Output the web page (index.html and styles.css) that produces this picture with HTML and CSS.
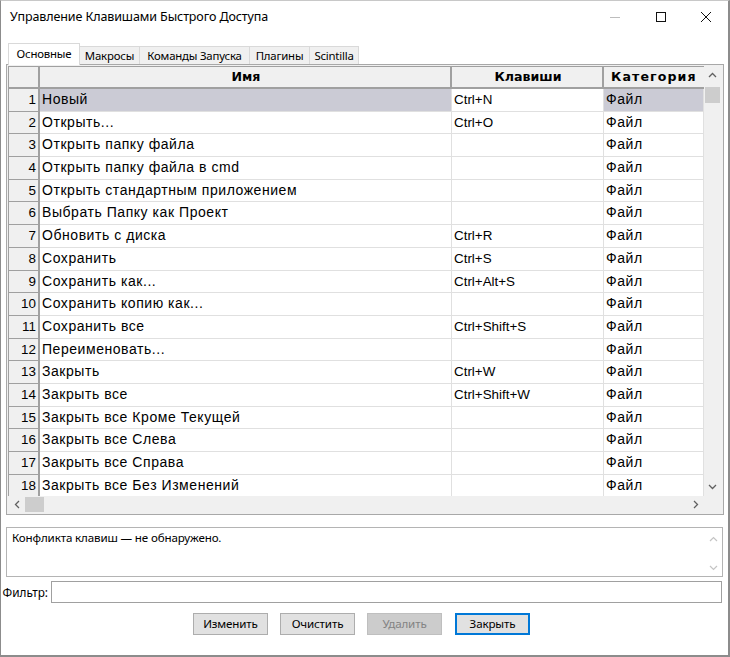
FILE: index.html
```html
<!DOCTYPE html>
<html lang="ru">
<head>
<meta charset="utf-8">
<title>Управление Клавишами Быстрого Доступа</title>
<link rel="stylesheet" href="styles.css">
</head>
<body>
<div class="window">
  <div class="titlebar">
    <div class="title">Управление Клавишами Быстрого Доступа</div>
    <div class="controls">
      <span class="ctl"><svg width="12" height="12" viewBox="0 0 12 12"><line x1="1" y1="6.5" x2="11" y2="6.5" stroke="#bdbdbd" stroke-width="1"/></svg></span>
      <span class="ctl"><svg width="12" height="12" viewBox="0 0 12 12"><rect x="1.5" y="1.5" width="9" height="9" fill="none" stroke="#111" stroke-width="1"/></svg></span>
      <span class="ctl"><svg width="12" height="12" viewBox="0 0 12 12"><path d="M1 1 L11 11 M11 1 L1 11" stroke="#111" stroke-width="1"/></svg></span>
    </div>
  </div>

  <div class="tabs">
    <div class="tab active t1">Основные</div>
    <div class="tab t2">Макросы</div>
    <div class="tab t3">Команды Запуска</div>
    <div class="tab t4">Плагины</div>
    <div class="tab t5">Scintilla</div>
  </div>

  <div class="grid">
    <div class="table">
      <div class="row head">
        <div class="c num"></div>
        <div class="c hname">Имя</div>
        <div class="c hkeys">Клавиши</div>
        <div class="c hcat">Категория</div>
      </div>
      <div class="row sel"><div class="c num">1</div><div class="c name">Новый</div><div class="c keys">Ctrl+N</div><div class="c cat">Файл</div></div>
      <div class="row"><div class="c num">2</div><div class="c name">Открыть...</div><div class="c keys">Ctrl+O</div><div class="c cat">Файл</div></div>
      <div class="row"><div class="c num">3</div><div class="c name">Открыть папку файла</div><div class="c keys"></div><div class="c cat">Файл</div></div>
      <div class="row"><div class="c num">4</div><div class="c name">Открыть папку файла в cmd</div><div class="c keys"></div><div class="c cat">Файл</div></div>
      <div class="row"><div class="c num">5</div><div class="c name">Открыть стандартным приложением</div><div class="c keys"></div><div class="c cat">Файл</div></div>
      <div class="row"><div class="c num">6</div><div class="c name">Выбрать Папку как Проект</div><div class="c keys"></div><div class="c cat">Файл</div></div>
      <div class="row"><div class="c num">7</div><div class="c name">Обновить с диска</div><div class="c keys">Ctrl+R</div><div class="c cat">Файл</div></div>
      <div class="row"><div class="c num">8</div><div class="c name">Сохранить</div><div class="c keys">Ctrl+S</div><div class="c cat">Файл</div></div>
      <div class="row"><div class="c num">9</div><div class="c name">Сохранить как...</div><div class="c keys">Ctrl+Alt+S</div><div class="c cat">Файл</div></div>
      <div class="row"><div class="c num">10</div><div class="c name">Сохранить копию как...</div><div class="c keys"></div><div class="c cat">Файл</div></div>
      <div class="row"><div class="c num">11</div><div class="c name">Сохранить все</div><div class="c keys">Ctrl+Shift+S</div><div class="c cat">Файл</div></div>
      <div class="row"><div class="c num">12</div><div class="c name">Переименовать...</div><div class="c keys"></div><div class="c cat">Файл</div></div>
      <div class="row"><div class="c num">13</div><div class="c name">Закрыть</div><div class="c keys">Ctrl+W</div><div class="c cat">Файл</div></div>
      <div class="row"><div class="c num">14</div><div class="c name">Закрыть все</div><div class="c keys">Ctrl+Shift+W</div><div class="c cat">Файл</div></div>
      <div class="row"><div class="c num">15</div><div class="c name">Закрыть все Кроме Текущей</div><div class="c keys"></div><div class="c cat">Файл</div></div>
      <div class="row"><div class="c num">16</div><div class="c name">Закрыть все Слева</div><div class="c keys"></div><div class="c cat">Файл</div></div>
      <div class="row"><div class="c num">17</div><div class="c name">Закрыть все Справа</div><div class="c keys"></div><div class="c cat">Файл</div></div>
      <div class="row"><div class="c num">18</div><div class="c name">Закрыть все Без Изменений</div><div class="c keys"></div><div class="c cat">Файл</div></div>
    </div>
    <div class="vscroll">
      <div class="arrow"><svg width="9" height="6" viewBox="0 0 9 6"><path d="M1 5 L4.5 1.5 L8 5" fill="none" stroke="#606060" stroke-width="1.3"/></svg></div>
      <div class="vtrack"><div class="vthumb"></div></div>
      <div class="arrow"><svg width="9" height="6" viewBox="0 0 9 6"><path d="M1 1 L4.5 4.5 L8 1" fill="none" stroke="#606060" stroke-width="1.3"/></svg></div>
    </div>
    <div class="hscroll">
      <div class="arrow"><svg width="6" height="9" viewBox="0 0 6 9"><path d="M5 1 L1.5 4.5 L5 8" fill="none" stroke="#606060" stroke-width="1.3"/></svg></div>
      <div class="htrack"><div class="hthumb"></div></div>
      <div class="arrow"><svg width="6" height="9" viewBox="0 0 6 9"><path d="M1 1 L4.5 4.5 L1 8" fill="none" stroke="#606060" stroke-width="1.3"/></svg></div>
    </div>
    <div class="corner"></div>
  </div>

  <div class="conflict">
    <div class="conflict-text">Конфликта клавиш — не обнаружено.</div>
    <div class="cscroll">
      <svg width="9" height="6" viewBox="0 0 9 6"><path d="M1 5 L4.5 1.5 L8 5" fill="none" stroke="#c4c4c4" stroke-width="1.2"/></svg>
      <svg width="9" height="6" viewBox="0 0 9 6"><path d="M1 1 L4.5 4.5 L8 1" fill="none" stroke="#c4c4c4" stroke-width="1.2"/></svg>
    </div>
  </div>

  <div class="filter">
    <div class="flabel"><span>Фильтр:</span></div>
    <div class="finput"></div>
  </div>

  <div class="buttons">
    <div class="btn">Изменить</div>
    <div class="btn">Очистить</div>
    <div class="btn disabled">Удалить</div>
    <div class="btn default">Закрыть</div>
  </div>
</div>
</body>
</html>
```

FILE: styles.css
```css
* { box-sizing: border-box; }
html, body { margin: 0; padding: 0; background: #ffffff; }
.window {
  width: 730px;
  height: 657px;
  border: 1px solid #8c8c8c;
  border-top-color: #c8c8c8;
  border-right-width: 2px;
  border-bottom-width: 2px;
  background: #ffffff;
  display: flex;
  flex-direction: column;
  font-family: "Noto Sans", "DejaVu Sans", sans-serif;
  color: #000;
  overflow: hidden;
}
.titlebar {
  height: 42px;
  display: flex;
  align-items: flex-start;
  justify-content: space-between;
}
.title {
  font-size: 12.5px;
  padding: 7px 0 0 9px;
  letter-spacing: -0.1px;
}
.controls { display: flex; }
.ctl {
  width: 46px;
  height: 31px;
  display: flex;
  align-items: center;
  justify-content: center;
}
.controls .ctl:last-child { width: 44px; }

.tabs {
  display: flex;
  padding-left: 7px;
  height: 21px;
  align-items: flex-end;
  position: relative;
  z-index: 2;
}
.tab {
  height: 18px;
  font-size: 11.4px;
  line-height: 17px;
  text-align: center;
  background: #f0f0f0;
  border: 1px solid #d9d9d9;
  border-bottom: none;
  margin-left: -1px;
  color: #000;
  letter-spacing: -0.2px;
  white-space: nowrap;
}
.tab.active {
  height: 22px;
  background: #ffffff;
  line-height: 19px;
  margin-bottom: -1px;
  margin-left: 0;
}
.t1 { width: 72px; }
.t2 { width: 61px; }
.t3 { width: 111px; }
.t4 { width: 61px; }
.t5 { width: 50px; }

.grid {
  margin-left: 5px;
  width: 718px;
  height: 451px;
  border: 1px solid #a8a8a8;
  padding: 1px;
  display: grid;
  grid-template-columns: 696px 17px;
  grid-template-rows: 430px 17px;
  background: #f0f0f0;
}
.table {
  overflow: hidden;
  background: #ffffff;
  font-family: "Liberation Sans", Arial, sans-serif;
  font-size: 13.4px;
}
.row {
  display: grid;
  grid-template-columns: 32px 412px 152px 100px;
  height: 22.7px;
}
.row.head { height: 23px; }
.c {
  white-space: nowrap;
  overflow: hidden;
  border-right: 1px solid #e0e0e0;
  border-bottom: 1px solid #e0e0e0;
  padding-left: 2px;
  line-height: 21px;
}
.c.name, .c.cat {
  font-size: 14px;
  letter-spacing: 0.55px;
}
.c.num {
  background: #f0f0f0;
  text-align: right;
  padding: 0 2px 0 0;
  border-right: 2px solid #a0a0a0;
  border-bottom: 1px solid #a0a0a0;
  border-left: 1px solid #a0a0a0;
}
.head .c {
  background: #f0f0f0;
  font-family: "DejaVu Sans", sans-serif;
  font-weight: bold;
  font-size: 12.6px;
  text-align: center;
  border-right: 2px solid #a0a0a0;
  border-bottom: 2px solid #a0a0a0;
  border-top: 1px solid #a0a0a0;
  line-height: 20px;
}
.head .c.num { border-left: 1px solid #a0a0a0; }
.head .hcat { text-align: left; padding-left: 7px; border-right: none; letter-spacing: 1.1px; }
.sel .name, .sel .cat { background: #cbcbd5; }

.vscroll {
  display: flex;
  flex-direction: column;
  background: #f0f0f0;
}
.vscroll .arrow {
  height: 18px;
  display: flex;
  align-items: center;
  justify-content: center;
}
.vtrack { flex: 1; padding: 3px 1px 0 1px; }
.vthumb { height: 16px; background: #cdcdcd; }

.hscroll {
  display: flex;
  background: #f0f0f0;
}
.hscroll .arrow {
  width: 17px;
  display: flex;
  align-items: center;
  justify-content: center;
}
.htrack { flex: 1; padding: 1px 0; }
.hthumb { width: 19px; height: 15px; background: #cdcdcd; }
.corner { background: #f0f0f0; }

.conflict {
  margin: 12px 0 0 5px;
  width: 717px;
  height: 50px;
  border: 1px solid #b4b4b4;
  display: flex;
  justify-content: space-between;
}
.conflict-text {
  font-size: 11.6px;
  padding: 2px 0 0 5px;
  letter-spacing: -0.15px;
}
.cscroll {
  width: 17px;
  display: flex;
  flex-direction: column;
  justify-content: space-between;
  align-items: center;
  padding: 8px 0 5px 0;
}

.filter {
  display: flex;
  align-items: center;
  margin-top: 4px;
  height: 22px;
}
.flabel {
  width: 50px;
  display: flex;
  justify-content: flex-end;
  padding-right: 3px;
  font-size: 11.8px;
}
.flabel span { white-space: nowrap; }
.finput {
  width: 671px;
  height: 22px;
  border: 1px solid #a0a0a0;
}

.buttons {
  display: flex;
  gap: 12px;
  padding-left: 192px;
  margin-top: 10px;
}
.btn {
  width: 75px;
  height: 22px;
  background: #e1e1e1;
  border: 1px solid #adadad;
  font-size: 11.6px;
  text-align: center;
  line-height: 20px;
  letter-spacing: -0.15px;
}
.btn.disabled { background: #cccccc; border-color: #bfbfbf; color: #838383; }
.btn.default { border: 2px solid #0078d7; line-height: 18px; margin-left: 1px; }
```
